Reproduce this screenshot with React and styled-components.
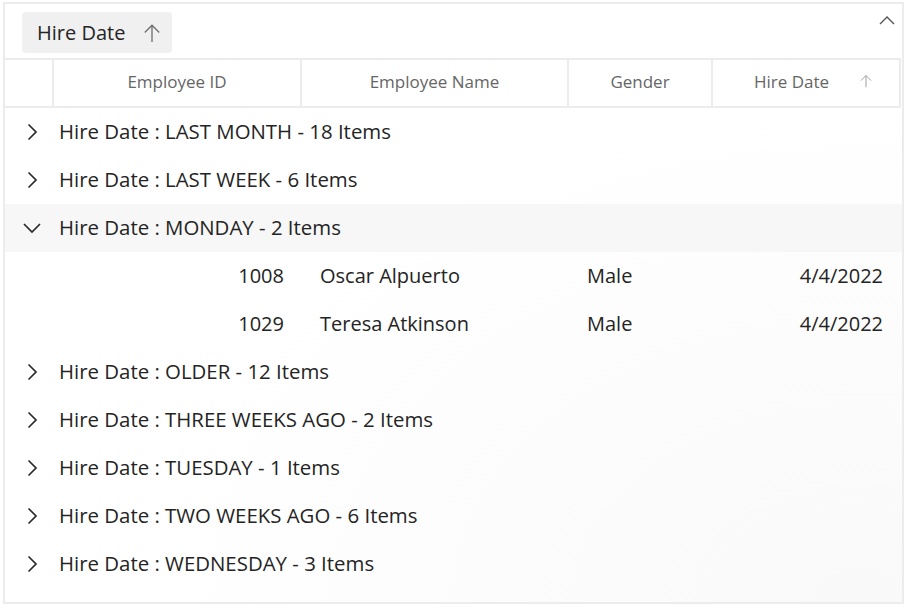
import React from 'react';
import styled, { createGlobalStyle } from 'styled-components';

const GlobalStyle = createGlobalStyle`
  body {
    margin: 0;
    background: #ffffff;
    font-family: 'Open Sans', 'Noto Sans', sans-serif;
    color: #212121;
  }
`;

const groups = [
  { key: 'LAST MONTH', count: 18 },
  { key: 'LAST WEEK', count: 6 },
  {
    key: 'MONDAY',
    count: 2,
    expanded: true,
    rows: [
      { id: 1008, name: 'Oscar Alpuerto', gender: 'Male', date: '4/4/2022' },
      { id: 1029, name: 'Teresa Atkinson', gender: 'Male', date: '4/4/2022' },
    ],
  },
  { key: 'OLDER', count: 12 },
  { key: 'THREE WEEKS AGO', count: 2 },
  { key: 'TUESDAY', count: 1 },
  { key: 'TWO WEEKS AGO', count: 6 },
  { key: 'WEDNESDAY', count: 3 },
];

const columns = '49px 248px 267px 144px 188px';

const ChevronRight = () => (
  <svg width="14" height="18" viewBox="0 0 14 18">
    <path d="M3.5 1.5 L11 9 L3.5 16.5" fill="none" stroke="#2a2a2a" strokeWidth="1.7" />
  </svg>
);

const ChevronDown = () => (
  <svg width="20" height="14" viewBox="0 0 20 14">
    <path d="M2 3 L10 11 L18 3" fill="none" stroke="#2a2a2a" strokeWidth="1.7" />
  </svg>
);

const ChevronUp = () => (
  <svg width="18" height="12" viewBox="0 0 18 12">
    <path d="M2 10 L9 3 L16 10" fill="none" stroke="#555" strokeWidth="1.4" />
  </svg>
);

const ArrowUp = ({ size = 18, color = '#666' }) => (
  <svg width={size} height={size} viewBox="0 0 18 18">
    <path d="M9 17 L9 2 M2.5 8.5 L9 2 L15.5 8.5" fill="none" stroke={color} strokeWidth="1.2" />
  </svg>
);

const App = () => {
  return (
    <>
      <GlobalStyle />
      <GridBox>
        <GroupDropArea>
          <GroupChip>
            <span>Hire Date</span>
            <ArrowUp size={20} color="#707070" />
          </GroupChip>
          <CollapseButton>
            <ChevronUp />
          </CollapseButton>
        </GroupDropArea>
        <HeaderRow>
          <HeaderCell />
          <HeaderCell>Employee ID</HeaderCell>
          <HeaderCell>Employee Name</HeaderCell>
          <HeaderCell>Gender</HeaderCell>
          <HeaderCell $sorted>
            <span>Hire Date</span>
            <SortIcon>
              <ArrowUp size={14} color="#9a9a9a" />
            </SortIcon>
          </HeaderCell>
        </HeaderRow>
        <Body>
          {groups.map((g) => (
            <React.Fragment key={g.key}>
              <GroupRow $expanded={g.expanded}>
                <Toggle>{g.expanded ? <ChevronDown /> : <ChevronRight />}</Toggle>
                <GroupText>
                  Hire Date : {g.key} - {g.count} Items
                </GroupText>
              </GroupRow>
              {g.expanded &&
                g.rows.map((r) => (
                  <DataRow key={r.id}>
                    <DataCell />
                    <DataCell $align="right">{r.id}</DataCell>
                    <DataCell>{r.name}</DataCell>
                    <DataCell>{r.gender}</DataCell>
                    <DataCell $align="right">{r.date}</DataCell>
                  </DataRow>
                ))}
            </React.Fragment>
          ))}
        </Body>
      </GridBox>
    </>
  );
};

const GridBox = styled.div`
  margin: 2px 0 0 3px;
  width: 897px;
  height: 598px;
  border: 2px solid #ececec;
  display: flex;
  flex-direction: column;
  background: radial-gradient(ellipse at 95% 100%, #f9f9f9 0%, #ffffff 60%);
`;

const GroupDropArea = styled.div`
  height: 54px;
  flex-shrink: 0;
  display: flex;
  justify-content: space-between;
  align-items: flex-start;
  padding: 8px 6px 0 17px;
  box-sizing: border-box;
  background: #ffffff;
`;

const GroupChip = styled.div`
  height: 41px;
  width: 150px;
  box-sizing: border-box;
  padding: 0 10px 0 15px;
  display: flex;
  align-items: center;
  justify-content: space-between;
  background: #f0f0f0;
  border-radius: 4px;
  font-size: 20px;
  color: #242424;
`;

const CollapseButton = styled.div`
  padding-top: 2px;
  display: flex;
`;

const HeaderRow = styled.div`
  display: grid;
  flex-shrink: 0;
  grid-template-columns: ${columns};
  height: 50px;
  border-top: 2px solid #ececec;
  border-bottom: 2px solid #ececec;
  box-sizing: border-box;
  background: #ffffff;
  width: 896px;
`;

const HeaderCell = styled.div`
  border-right: 2px solid #ececec;
  display: flex;
  align-items: center;
  justify-content: center;
  position: relative;
  font-size: 17px;
  color: #666666;
  padding-bottom: 3px;
  padding-right: ${(p) => (p.$sorted ? '29px' : '0')};
`;

const SortIcon = styled.span`
  position: absolute;
  right: 26px;
  top: 14px;
  display: flex;
`;

const Body = styled.div`
  flex: 1;
  display: flex;
  flex-direction: column;
`;

const GroupRow = styled.div`
  height: 48px;
  flex-shrink: 0;
  display: flex;
  align-items: center;
  background: ${(p) => (p.$expanded ? '#f7f7f7' : 'transparent')};
`;

const Toggle = styled.div`
  width: 53px;
  display: flex;
  justify-content: center;
`;

const GroupText = styled.div`
  font-size: 20.4px;
  color: #242424;
  padding: 0 0 2px 1px;
`;

const DataRow = styled.div`
  display: grid;
  flex-shrink: 0;
  grid-template-columns: ${columns};
  height: 48px;
  align-items: center;
`;

const DataCell = styled.div`
  font-size: 20px;
  color: #242424;
  text-align: ${(p) => p.$align || 'left'};
  padding: ${(p) => (p.$align === 'right' ? '0 18px 2px 0' : '0 0 2px 18px')};
  white-space: nowrap;
`;

export default App;
